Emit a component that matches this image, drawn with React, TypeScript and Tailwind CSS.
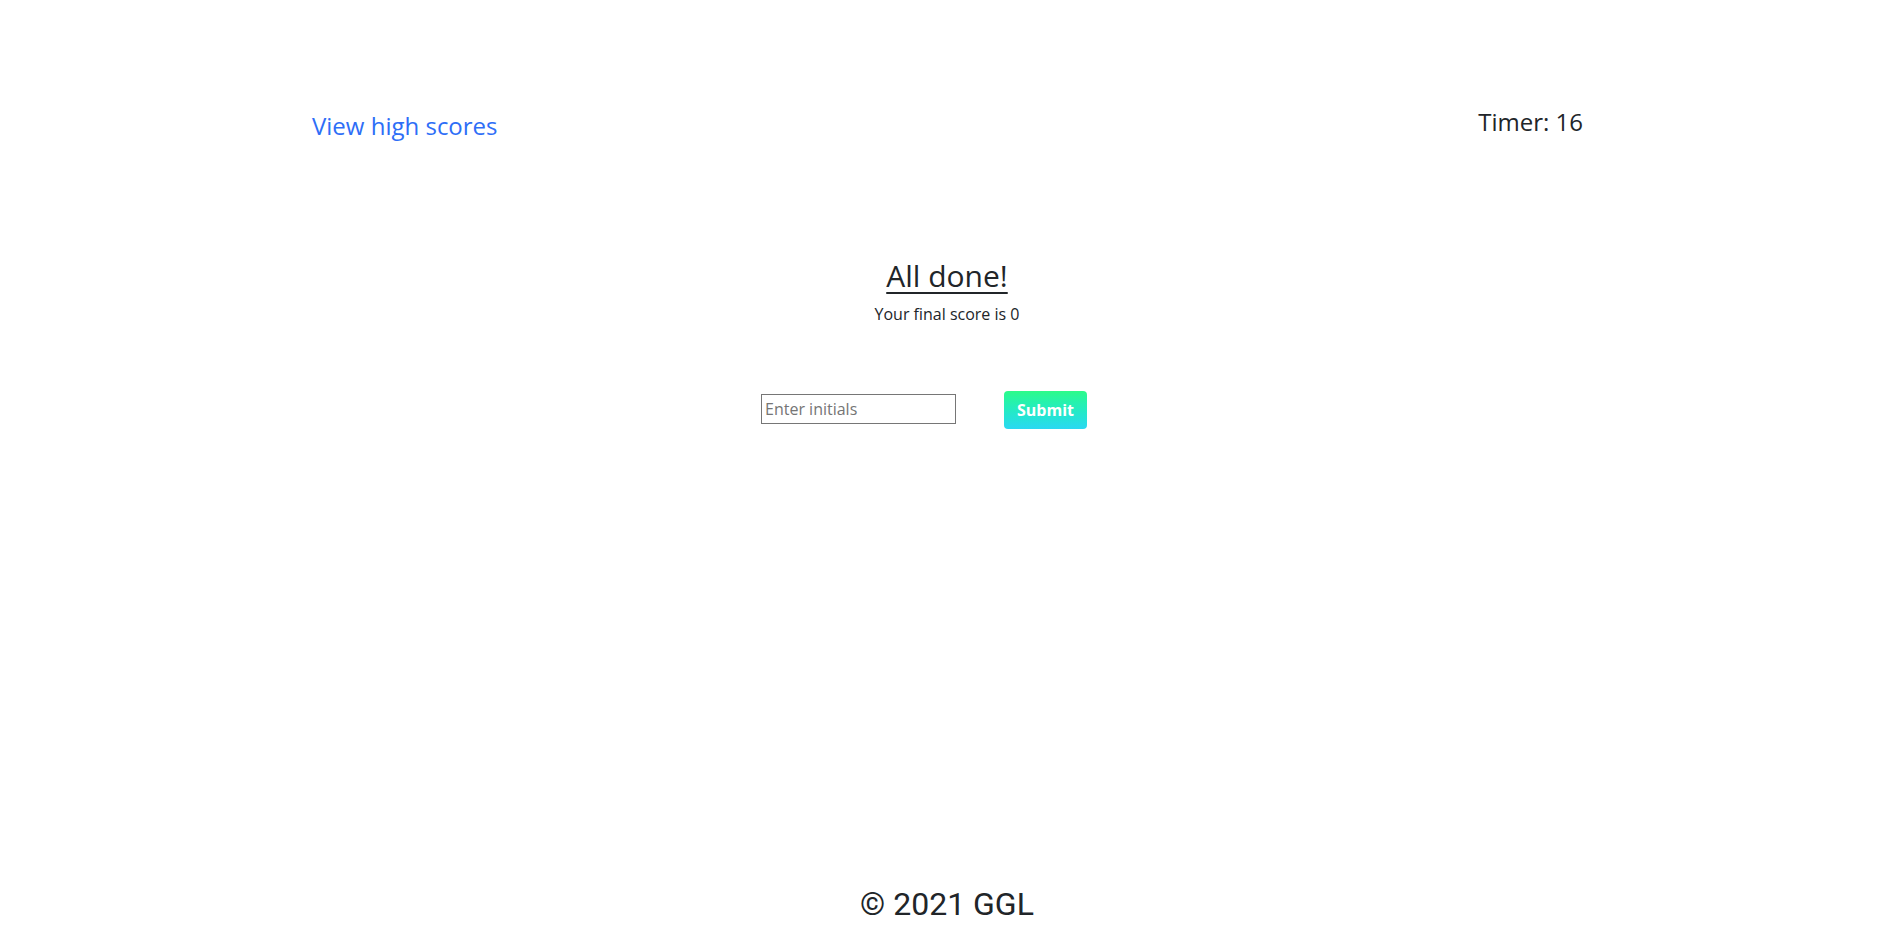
import React, { useState } from 'react';

export default function App() {
  const [initials, setInitials] = useState('');
  const timer = 16;
  const score = 0;

  return (
    <div className="min-h-[928px] w-full flex flex-col bg-white text-[#212529] font-['Open_Sans',sans-serif]">
      {/* Header */}
      <header className="flex justify-between items-start pt-[104px] pl-[312px] pr-[317px]">
        <a href="#" className="mt-[4px] text-[24px] leading-[36px] text-[#2e6ef7]">
          View high scores
        </a>
        <div className="text-[24px] leading-[36px]">Timer: {timer}</div>
      </header>

      {/* Result */}
      <main className="flex flex-col items-center pt-[114px] pr-[6px]">
        <h1 className="text-[30px] leading-[36px] underline decoration-2 underline-offset-[5px] mb-[8px]">
          All done!
        </h1>
        <p className="text-[16px] leading-[24px]">Your final score is {score}</p>
      </main>

      <form
        className="flex items-center gap-[48px] pl-[761px] pt-[63px]"
        onSubmit={(e) => e.preventDefault()}
      >
        <input
          type="text"
          value={initials}
          onChange={(e) => setInitials(e.target.value)}
          placeholder="Enter initials"
          className="w-[195px] h-[30px] border border-[#767676] px-[3px] text-[16px] placeholder:text-[#757575] outline-none"
        />
        <button
          type="submit"
          className="w-[83px] h-[38px] mt-[2px] rounded-[4px] bg-gradient-to-b from-[#2cfb88] to-[#2bd8f2] text-white font-bold text-[16px]"
        >
          Submit
        </button>
      </form>

      {/* Footer */}
      <footer className="mt-auto pr-[6px] text-center text-[32px] leading-[48px] font-['Roboto',sans-serif] text-[#212529]">
        © 2021 GGL
      </footer>
    </div>
  );
}
